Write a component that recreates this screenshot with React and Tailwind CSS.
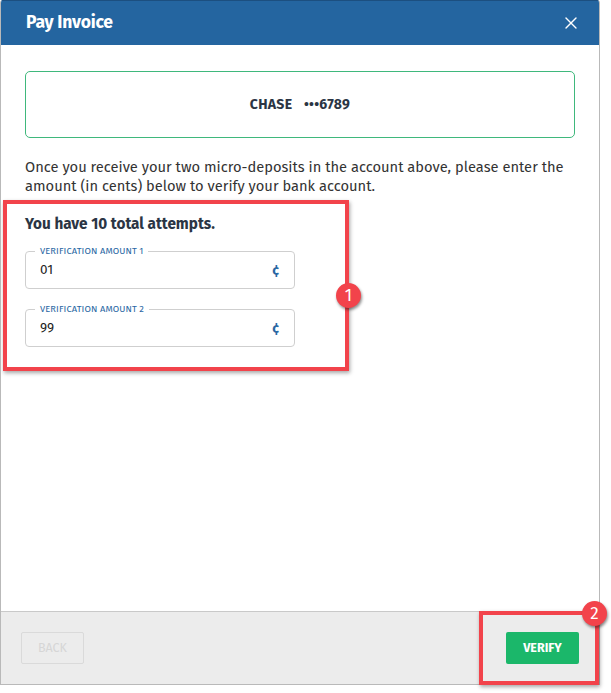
import React from "react";
import { X } from "lucide-react";

function AmountField({ label, value }) {
  return (
    <div className="relative w-[270px] h-[38px] border border-[#cfcfcf] rounded-[4px] flex items-center justify-between pl-[14px] pr-[15px]">
      <span className="absolute -top-[7px] left-[9px] bg-white px-[5px] text-[9.3px] leading-[12px] tracking-[0.1px] text-[#2a67a3] uppercase">
        {label}
      </span>
      <span className="text-[13.5px] text-[#222]">{value}</span>
      <span className="text-[14px] font-bold text-[#2a67a3]">¢</span>
    </div>
  );
}

function Badge({ n, className }) {
  return (
    <div
      className={`absolute w-[25px] h-[25px] rounded-full bg-[#f2434b] text-white text-[17px] leading-none flex items-center justify-center shadow-[1px_2px_3px_rgba(0,0,0,0.45)] ${className}`}
    >
      {n}
    </div>
  );
}

export default function App() {
  return (
    <main
      className="w-[611px] h-[693px] bg-white relative overflow-hidden"
      style={{ fontFamily: '"Fira Sans", "Open Sans", Lato, sans-serif' }}
    >
      <div className="w-[600px] h-[685px] flex flex-col border-l border-r border-b border-[#b9b9b9] rounded-t-[3px] overflow-hidden">
        <header className="h-[45px] bg-[#2465a0] border-t border-[#1c4f80] flex items-center justify-between pl-[25px] pr-[18px] shrink-0">
          <h1 className="text-white font-bold text-[17.5px] tracking-[-0.2px]">Pay Invoice</h1>
          <X className="w-[20px] h-[20px] text-white" strokeWidth={1.6} />
        </header>

        <section className="flex-1 relative px-[24px] pt-[26px]">
          <div className="h-[67px] border border-[#3fb87c] rounded-[5px] flex items-center justify-center">
            <span className="text-[14px] font-bold text-[#2b3544] tracking-[0.3px]">
              CHASE <span className="ml-[8px]">•••6789</span>
            </span>
          </div>

          <p className="mt-[20px] text-[14.7px] leading-[19px] text-[#333]">
            Once you receive your two micro-deposits in the account above, please enter the amount (in cents) below to verify your bank account.
          </p>

          <h2 className="mt-[18px] text-[15.3px] leading-[20px] font-bold text-[#2b3544]">You have 10 total attempts.</h2>

          <div className="mt-[17px] flex flex-col gap-[20px]">
            <AmountField label="Verification Amount 1" value="01" />
            <AmountField label="Verification Amount 2" value="99" />
          </div>

          <div className="absolute left-[2px] top-[155px] w-[346px] h-[171px] border-[4px] border-[#f2434b] shadow-[1px_2px_4px_rgba(0,0,0,0.35)]" />
          <Badge n="1" className="left-[335px] top-[238px]" />
        </section>

        <footer className="h-[73px] bg-[#ececec] border-t border-[#c9c9c9] flex items-center justify-between pl-[20px] pr-[20px] shrink-0">
          <button className="w-[63px] h-[32px] border border-[#dadada] rounded-[2px] text-[12.5px] text-[#d6d6d6]">BACK</button>
          <button className="w-[73px] h-[32px] bg-[#1bb76a] rounded-[2px] text-[12.5px] font-bold text-white">VERIFY</button>
        </footer>
      </div>

      <div className="absolute left-[479px] top-[611px] w-[120px] h-[74px] border-[4px] border-[#f2434b] shadow-[1px_2px_4px_rgba(0,0,0,0.35)]" />
      <Badge n="2" className="left-[582px] top-[601px]" />
    </main>
  );
}
